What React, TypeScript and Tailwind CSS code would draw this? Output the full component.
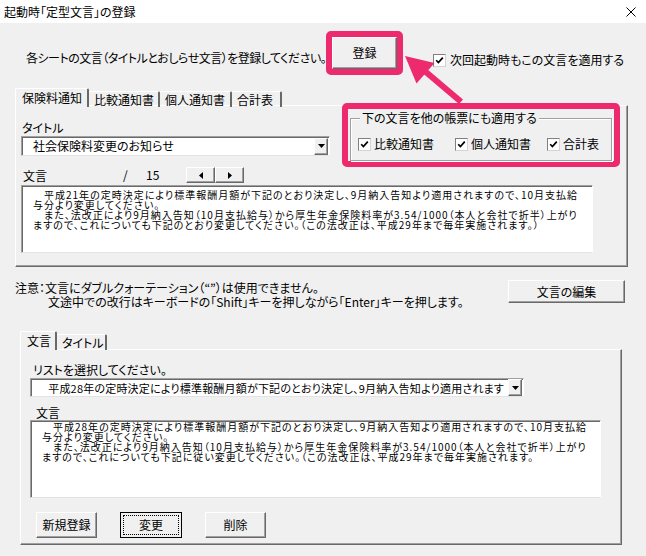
import React from "react";

const BTN =
  "bg-[#f0f0f0] border border-t-white border-l-white border-r-[#696969] border-b-[#696969] shadow-[inset_-1px_-1px_0_#a0a0a0] flex items-center justify-center";
const FIELD =
  "bg-white border border-t-[#a0a0a0] border-l-[#a0a0a0] border-r-white border-b-[#e3e3e3] shadow-[inset_1px_1px_0_#696969]";
const PANEL =
  "border border-t-white border-l-white border-r-[#696969] border-b-[#696969] shadow-[inset_-1px_-1px_0_#a0a0a0]";

const TOP_TEXT = [
  "　平成21年の定時決定により標準報酬月額が下記のとおり決定し、9月納入告知より適用されますので、10月支払給",
  "与分より変更してください。",
  "　また、法改正により9月納入告知（10月支払給与）から厚生年金保険料率が3.54/1000（本人と会社で折半）上がり",
  "ますので、これについても下記のとおり変更してください。（この法改正は、平成29年まで毎年実施されます。）",
];

const LOW_TEXT = [
  "　平成28年の定時決定により標準報酬月額が下記のとおり決定し、9月納入告知より適用されますので、10月支払給",
  "与分より変更してください。",
  "　また、法改正により9月納入告知（10月支払給与）から厚生年金保険料率が3.54/1000（本人と会社で折半）上がり",
  "ますので、これについても下記に従い変更してください。（この法改正は、平成29年まで毎年実施されます。",
];

function Check() {
  return (
    <span className="w-[13px] h-[13px] shrink-0 bg-white border border-t-[#808080] border-l-[#808080] border-r-[#d4d4d4] border-b-[#d4d4d4] flex items-center justify-center">
      <svg width="9" height="9" viewBox="0 0 9 9">
        <path d="M1.2 4.2 L3.4 6.6 L7.8 1.6" stroke="#000" strokeWidth="1.7" fill="none" />
      </svg>
    </span>
  );
}

function DropBtn() {
  return (
    <div className={`${BTN} shrink-0 w-[14px] h-[17px] ml-auto mr-[1px]`}>
      <svg width="7" height="4" viewBox="0 0 7 4">
        <path d="M0 0 H7 L3.5 4 Z" fill="#000" />
      </svg>
    </div>
  );
}

function Tab({ label, active, w }: { label: string; active?: boolean; w: string }) {
  return active ? (
    <div className={`${w} h-[19px] -mb-[1px] relative z-10 bg-[#f0f0f0] border-t border-l border-t-white border-l-white border-r-2 border-r-[#696969] rounded-t-[2px] flex items-center pl-[6px] whitespace-nowrap`}>
      {label}
    </div>
  ) : (
    <div className={`${w} h-[16px] mt-[3px] border-t border-t-white border-r-2 border-r-[#696969] rounded-t-[2px] flex items-center pl-[5px] whitespace-nowrap`}>
      {label}
    </div>
  );
}

function Memo({ lines, cls }: { lines: string[]; cls: string }) {
  return (
    <div className={`${FIELD} ${cls} pl-[11px] text-[10px] leading-[10px] tracking-[1px] whitespace-pre overflow-hidden`}>
      {lines.map((l, i) => (
        <div key={i} className="h-[10px]">{l}</div>
      ))}
    </div>
  );
}

export default function App() {
  return (
    <div className="w-[646px] h-[556px] flex flex-col bg-[#f0f0f0] text-[12px] leading-[14px] text-black font-['Noto_Sans_CJK_JP',sans-serif] [font-feature-settings:'palt'] overflow-hidden">
      {/* title bar */}
      <div className="h-[23px] shrink-0 bg-white flex items-center pl-[4px] pr-[10px]">
        <span className="text-[12px]">起動時「定型文言」の登録</span>
        <svg className="ml-auto" width="10" height="10" viewBox="0 0 10 10">
          <path d="M0.5 0.5 L9.5 9.5 M9.5 0.5 L0.5 9.5" stroke="#000" strokeWidth="1" />
        </svg>
      </div>

      {/* header row */}
      <div className="relative flex items-start h-[65px] pt-[8px] shrink-0">
        <span className="ml-[26px] w-[300px] mt-[20px] whitespace-nowrap tracking-[-0.5px]">各シートの文言（タイトルとおしらせ文言）を登録してください。</span>
        <div className="w-[77px] h-[44px] border-[6px] border-[#ee2a6f] rounded-[5px]">
          <div className={`${BTN} w-full h-full`}>登録</div>
        </div>
        <div className="ml-[30px] mt-[22px] flex items-center gap-[4px]">
          <Check />
          <span>次回起動時もこの文言を適用する</span>
        </div>
        <svg className="absolute left-[398px] top-[24px] z-20" width="70" height="60" viewBox="398 47 70 60">
          <path d="M423 73.5 L459 104 L463 99.5 L427 69 Z" fill="#ee2a6f" />
          <path d="M405 56 L434.5 63 L416.5 83.5 Z" fill="#ee2a6f" />
        </svg>
      </div>

      {/* first tab control */}
      <div className="ml-[15px] w-[613px] shrink-0">
        <div className="flex h-[17px] items-start">
          <Tab label="保険料通知" active w="w-[74px]" />
          <Tab label="比較通知書" w="w-[71px]" />
          <Tab label="個人通知書" w="w-[72px]" />
          <Tab label="合計表" w="w-[50px]" />
        </div>
        <div className={`${PANEL} h-[162px] px-[5px]`}>
          <div className="flex">
            <div className="w-[309px] flex flex-col">
              <div className="mt-[15px] pl-[1px]">タイトル</div>
              <div className={`${FIELD} mt-[1px] h-[20px] flex items-center pl-[11px]`}>
                <span>社会保険料変更のお知らせ</span>
                <DropBtn />
              </div>
              <div className="mt-[11px] h-[16px] flex items-center">
                <span className="ml-[2px] w-[100px] mt-[2px]">文言</span>
                <span className="w-[23px]">/</span>
                <span className="w-[40px]">15</span>
                <div className={`${BTN} w-[29px] h-[16px]`}>
                  <svg width="4" height="7" viewBox="0 0 4 7"><path d="M4 0 V7 L0 3.5 Z" fill="#000" /></svg>
                </div>
                <div className={`${BTN} w-[29px] h-[16px]`}>
                  <svg width="4" height="7" viewBox="0 0 4 7"><path d="M0 0 V7 L4 3.5 Z" fill="#000" /></svg>
                </div>
              </div>
            </div>
            <div className="ml-[12px] -mt-[3px] w-[278px] h-[64px] border-[6px] border-[#ee2a6f] rounded-[5px] relative z-10">
              <div className="ml-[2px] mt-[9px] w-[262px] h-[43px] border border-[#a0a0a0] shadow-[inset_1px_1px_0_white,1px_1px_0_white] flex flex-col">
                <span className="-mt-[8px] ml-[9px] px-[2px] self-start bg-[#f0f0f0]">下の文言を他の帳票にも適用する</span>
                <div className="flex items-center mt-[12px] ml-[7px]">
                  <div className="w-[97px] flex items-center gap-[3px]"><Check /><span>比較通知書</span></div>
                  <div className="w-[92px] flex items-center gap-[3px]"><Check /><span>個人通知書</span></div>
                  <div className="flex items-center gap-[3px]"><Check /><span>合計表</span></div>
                </div>
              </div>
            </div>
          </div>
          <Memo lines={TOP_TEXT} cls="mt-[2px] w-[572px] h-[68px] pt-[4px]" />
        </div>
      </div>

      {/* notes row */}
      <div className="flex items-start mt-[13px] shrink-0">
        <div className="pl-[15px] pt-[1px] flex flex-col">
          <span>注意：文言にダブルクォーテーション（“”）は使用できません。</span>
          <span className="pl-[33px]">文途中での改行はキーボードの「Shift」キーを押しながら「Enter」キーを押します。</span>
        </div>
        <div className={`${BTN} ml-auto mr-[21px] w-[117px] h-[23px]`}>文言の編集</div>
      </div>

      {/* second tab control */}
      <div className="ml-[20px] w-[602px] mt-[22px] shrink-0">
        <div className="flex h-[18px] items-start">
          <Tab label="文言" active w="w-[37px]" />
          <Tab label="タイトル" w="w-[50px]" />
        </div>
        <div className={`${PANEL} h-[196px] flex flex-col`}>
          <span className="mt-[13px] ml-[12px]">リストを選択してください。</span>
          <div className={`${FIELD} ml-[9px] mt-[1px] w-[494px] h-[19px] flex items-center pl-[6px] overflow-hidden`}>
            <span className="flex-1 min-w-0 overflow-hidden whitespace-nowrap text-[11px] tracking-[0.2px]">　平成28年の定時決定により標準報酬月額が下記のとおり決定し、9月納入告知より適用されます</span>
            <DropBtn />
          </div>
          <span className="mt-[9px] ml-[15px]">文言</span>
          <Memo lines={LOW_TEXT} cls="ml-[9px] w-[571px] h-[78px] pt-[1px]" />
          <div className="flex mt-[14px] ml-[15px] gap-[23px]">
            <div className={`${BTN} w-[61px] h-[26px]`}>新規登録</div>
            <div className="w-[62px] h-[26px] border border-black p-[2px] bg-[#f0f0f0]">
              <div className="w-full h-full border border-dotted border-black flex items-center justify-center">変更</div>
            </div>
            <div className={`${BTN} w-[61px] h-[26px]`}>削除</div>
          </div>
        </div>
      </div>
    </div>
  );
}
